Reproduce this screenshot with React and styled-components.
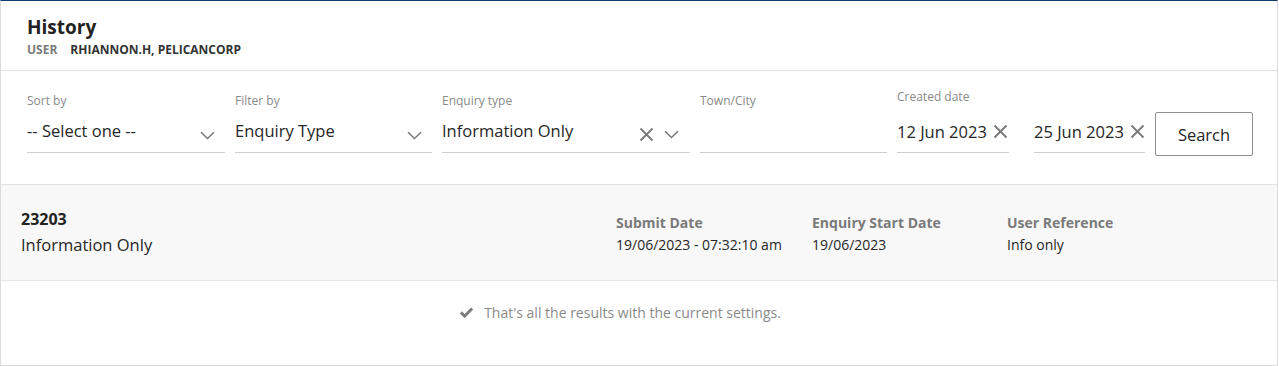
import React from 'react';
import styled, { createGlobalStyle } from 'styled-components';

const GlobalStyle = createGlobalStyle`
  body {
    margin: 0;
    background: #ffffff;
    font-family: 'Open Sans', 'Noto Sans', sans-serif;
    color: #262626;
  }
`;

const Panel = styled.div`
  width: 1278px;
  box-sizing: border-box;
  border: 1px solid #dcdcdc;
  border-top: 1px solid #0e3c6f;
  background: #fff;
`;

const Header = styled.div`
  padding: 14px 26px 12px;
  border-bottom: 1px solid #e2e2e2;
`;

const Title = styled.h1`
  margin: 0;
  font-size: 19px;
  line-height: 24px;
  font-weight: 700;
  color: #222;
`;

const UserLine = styled.div`
  margin-top: 3px;
  display: flex;
  gap: 13px;
  font-size: 12px;
  line-height: 16px;
  font-weight: 700;
  text-transform: uppercase;
`;

const UserKey = styled.span`
  color: #7a7a7a;
`;

const UserValue = styled.span`
  color: #333;
`;

const FilterBar = styled.div`
  display: flex;
  align-items: flex-start;
  height: 114px;
  box-sizing: border-box;
  padding: 21px 24px 0 26px;
  border-bottom: 1px solid #e2e2e2;
`;

const Field = styled.div`
  display: flex;
  flex-direction: column;
  width: ${(p) => p.$w}px;
  margin-right: ${(p) => (p.$gap ?? 10)}px;
  flex-shrink: 0;
`;

const DateGroup = styled.div`
  display: flex;
  flex-direction: column;
  margin-top: -4px;
  margin-right: 10px;
`;

const DateRow = styled.div`
  display: flex;
  gap: 25px;
`;

const Label = styled.label`
  font-size: 12px;
  line-height: 18px;
  color: #8a8a8a;
`;

const Control = styled.div`
  display: flex;
  align-items: center;
  height: 42px;
  margin-top: ${(p) => p.$offset || 0}px;
  border-bottom: 1px solid #cfcfcf;
  font-size: 16.5px;
  color: #262626;
`;

const Value = styled.span`
  flex: 1;
  white-space: nowrap;
  padding-bottom: ${(p) => p.$pb ?? 2}px;
`;

const IconSlot = styled.span`
  display: flex;
  align-items: center;
  margin-top: ${(p) => p.$dy || 0}px;
  margin-left: ${(p) => p.$ml || 0}px;
  margin-right: ${(p) => p.$mr || 0}px;
`;

const SearchButton = styled.button`
  margin-top: 20px;
  width: 99px;
  height: 44px;
  background: #fff;
  border: 1px solid #8f8f8f;
  border-radius: 2px;
  font-family: inherit;
  font-size: 16.5px;
  color: #262626;
  cursor: pointer;
`;

const ResultRow = styled.div`
  display: flex;
  align-items: flex-start;
  height: 96px;
  box-sizing: border-box;
  padding: 23px 20px 0 20px;
  background: #f8f8f8;
  border-bottom: 1px solid #e6e6e6;
`;

const ResultMain = styled.div`
  flex: 1;
`;

const RefNumber = styled.div`
  font-size: 16px;
  line-height: 22px;
  font-weight: 700;
  color: #222;
`;

const RefType = styled.div`
  margin-top: 3px;
  font-size: 16.5px;
  line-height: 24px;
  color: #262626;
`;

const Column = styled.div`
  width: ${(p) => p.$w}px;
  margin-top: 5px;
`;

const ColLabel = styled.div`
  font-size: 14px;
  line-height: 20px;
  font-weight: 700;
  color: #7a7a7a;
`;

const ColValue = styled.div`
  margin-top: 2px;
  font-size: 14px;
  line-height: 20px;
  color: #262626;
`;

const Footer = styled.div`
  display: flex;
  justify-content: center;
  align-items: center;
  gap: 10px;
  height: 84px;
  box-sizing: border-box;
  padding: 22px 38px 0 0;
  align-items: flex-start;
  font-size: 14px;
  line-height: 20px;
  color: #8a8a8a;
`;

const CheckSlot = styled.span`
  display: flex;
  padding-top: 4px;
`;

const Chevron = () => (
  <svg width="15" height="9" viewBox="0 0 15 9" fill="none">
    <path d="M1 1.2 L7.5 7.5 L14 1.2" stroke="#7a7a7a" strokeWidth="1.6" />
  </svg>
);

const Cross = () => (
  <svg width="15" height="15" viewBox="0 0 15 15" fill="none">
    <path d="M1.5 1.5 L13.5 13.5 M13.5 1.5 L1.5 13.5" stroke="#7a7a7a" strokeWidth="1.9" />
  </svg>
);

const Check = () => (
  <svg width="15" height="12" viewBox="0 0 15 12">
    <path d="M0.8 6.4 L2.9 4.3 L5.6 7 L12.1 0.5 L14.2 2.6 L5.6 11.2 Z" fill="#7d7d7d" />
  </svg>
);

const App = () => (
  <>
    <GlobalStyle />
    <Panel>
      <Header>
        <Title>History</Title>
        <UserLine>
          <UserKey>User</UserKey>
          <UserValue>Rhiannon.H, PelicanCorp</UserValue>
        </UserLine>
      </Header>

      <FilterBar>
        <Field $w={198}>
          <Label>Sort by</Label>
          <Control>
            <Value>-- Select one --</Value>
            <IconSlot $dy={8} $mr={10}><Chevron /></IconSlot>
          </Control>
        </Field>
        <Field $w={197}>
          <Label>Filter by</Label>
          <Control>
            <Value>Enquiry Type</Value>
            <IconSlot $dy={8} $mr={10}><Chevron /></IconSlot>
          </Control>
        </Field>
        <Field $w={248}>
          <Label>Enquiry type</Label>
          <Control>
            <Value>Information Only</Value>
            <IconSlot $dy={6} $mr={10}><Cross /></IconSlot>
            <IconSlot $dy={6} $mr={11}><Chevron /></IconSlot>
          </Control>
        </Field>
        <Field $w={187}>
          <Label>Town/City</Label>
          <Control />
        </Field>
        <DateGroup>
          <Label>Created date</Label>
          <DateRow>
            <Field $w={112} $gap={0}>
              <Control $offset={4}>
                <Value $pb={0}>12 Jun 2023</Value>
                <IconSlot $dy={0} $mr={1}><Cross /></IconSlot>
              </Control>
            </Field>
            <Field $w={111} $gap={0}>
              <Control $offset={4}>
                <Value $pb={0}>25 Jun 2023</Value>
                <IconSlot $dy={0} $mr={0}><Cross /></IconSlot>
              </Control>
            </Field>
          </DateRow>
        </DateGroup>
        <SearchButton type="button">Search</SearchButton>
      </FilterBar>

      <ResultRow>
        <ResultMain>
          <RefNumber>23203</RefNumber>
          <RefType>Information Only</RefType>
        </ResultMain>
        <Column $w={196}>
          <ColLabel>Submit Date</ColLabel>
          <ColValue>19/06/2023 - 07:32:10 am</ColValue>
        </Column>
        <Column $w={195}>
          <ColLabel>Enquiry Start Date</ColLabel>
          <ColValue>19/06/2023</ColValue>
        </Column>
        <Column $w={250}>
          <ColLabel>User Reference</ColLabel>
          <ColValue>Info only</ColValue>
        </Column>
      </ResultRow>

      <Footer>
        <CheckSlot><Check /></CheckSlot>
        <span>That's all the results with the current settings.</span>
      </Footer>
    </Panel>
  </>
);

export default App;
